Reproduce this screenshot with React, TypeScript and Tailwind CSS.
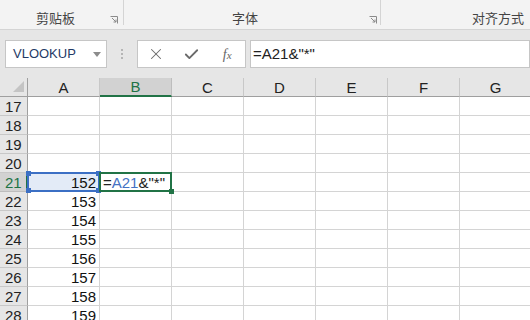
import { X, Check } from "lucide-react";

const cols = ["A", "B", "C", "D", "E", "F", "G"];
const rows = [17, 18, 19, 20, 21, 22, 23, 24, 25, 26, 27, 28];
const values: Record<number, string> = {
  21: "152", 22: "153", 23: "154", 24: "155", 25: "156", 26: "157", 27: "158", 28: "159",
};

function Launcher() {
  return (
    <svg width="8" height="8" viewBox="0 0 8 8" className="shrink-0">
      <path d="M0.5 0.5h7v7" fill="none" stroke="#8a8a8a" strokeWidth="1" />
      <path d="M2 2l4 4M3.5 6h2.5v-2.5" fill="none" stroke="#8a8a8a" strokeWidth="1" />
    </svg>
  );
}

function Handle({ pos, color }: { pos: string; color: string }) {
  return <div className={`absolute w-[5px] h-[5px] ${pos} ${color}`} />;
}

export default function App() {
  return (
    <div className="w-[530px] h-[320px] overflow-hidden bg-[#e6e6e6] font-['Liberation_Sans','Noto_Sans_CJK_SC',sans-serif]">
      {/* Ribbon group labels */}
      <div className="h-[30px] bg-[#f3f3f3] border-b border-[#d4d4d4] flex items-start text-[13px] text-[#444] font-['Noto_Sans_CJK_SC',sans-serif]">
        <div className="w-[124px] h-[25px] border-r border-[#d4d4d4] flex items-end">
          <span className="ml-[36px] mr-auto leading-[15px]">剪贴板</span>
          <div className="mr-[5px] mb-[1px]"><Launcher /></div>
        </div>
        <div className="w-[257px] h-[25px] border-r border-[#d4d4d4] flex items-end">
          <span className="ml-[108px] mr-auto leading-[15px]">字体</span>
          <div className="mr-[3px] mb-[1px]"><Launcher /></div>
        </div>
        <div className="flex-1 h-[25px] flex items-end">
          <span className="ml-[91px] leading-[15px]">对齐方式</span>
        </div>
      </div>

      {/* Formula bar */}
      <div className="flex items-center h-[28px] mt-[10px] pl-[5px]">
        <div className="w-[102px] h-[28px] bg-white border border-[#c6c6c6] flex items-center pl-[7px] pr-[5px]">
          <span className="text-[13px] text-[#1f3a66] flex-1">VLOOKUP</span>
          <svg width="8" height="5" viewBox="0 0 8 5"><path d="M0 0h8L4 5z" fill="#8c8c8c" /></svg>
        </div>
        <div className="w-[30px] flex flex-col items-center gap-[2px]">
          <div className="w-[2px] h-[2px] bg-[#b5b5b5]" />
          <div className="w-[2px] h-[2px] bg-[#b5b5b5]" />
          <div className="w-[2px] h-[2px] bg-[#b5b5b5]" />
        </div>
        <div className="w-[109px] h-[28px] bg-white border border-[#c6c6c6] flex items-center text-[#6a6a6a]">
          <div className="w-[36px] flex justify-center"><X size={18} strokeWidth={1.4} /></div>
          <div className="w-[36px] flex justify-center"><Check size={17} strokeWidth={2.6} /></div>
          <div className="w-[36px] flex justify-center">
            <span className="font-['Liberation_Serif',serif] italic text-[14px] text-[#666]">f<span className="text-[11px]">x</span></span>
          </div>
        </div>
        <div className="flex-1 h-[28px] ml-[4px] bg-white border border-[#c6c6c6] flex items-center pl-[2px] text-[15px] text-[#222]">
          =A21&amp;"*"
        </div>
      </div>

      {/* Sheet */}
      <div className="mt-[10px] grid grid-cols-[28px_repeat(7,72px)] text-[15px] leading-none">
        <div className="h-[19px] bg-[#e6e6e6] border-r border-b border-[#9f9f9f] flex items-end justify-end pr-[3px] pb-[4px]">
          <svg width="11" height="11" viewBox="0 0 11 11"><path d="M11 0v11H0z" fill="#c4c4c4" /></svg>
        </div>
        {cols.map((c) => (
          <div
            key={c}
            className={
              c === "B"
                ? "h-[19px] bg-[#d2d2d2] border-r border-[#bdbdbd] border-b-2 border-b-[#217346] flex items-center justify-center text-[#217346]"
                : "h-[19px] bg-[#e6e6e6] border-r border-[#c8c8c8] border-b border-b-[#9f9f9f] flex items-center justify-center text-[#222]"
            }
          >
            {c}
          </div>
        ))}
        {rows.map((r) => (
          <div key={r} className="contents">
            <div
              className={
                r === 21
                  ? "h-[19px] bg-[#d2d2d2] border-r-2 border-r-[#217346] border-b border-[#bdbdbd] flex items-center pl-[5px] text-[#217346]"
                  : "h-[19px] bg-[#e6e6e6] border-r border-r-[#9f9f9f] border-b border-[#c8c8c8] flex items-center pl-[5px] text-[#222]"
              }
            >
              {r}
            </div>
            {cols.map((c) => {
              if (c === "A" && r === 21) {
                return (
                  <div key={c} className="relative h-[19px] bg-[#e3ebf7] border-r border-b border-[#d4d4d4] flex items-center justify-end pr-[3px] text-[#111]">
                    {values[r]}
                    <div className="absolute -left-px -top-px -right-px -bottom-px border-2 border-[#3b6fc4]" />
                    <Handle pos="-left-[2px] -top-[2px]" color="bg-[#3b6fc4]" />
                    <Handle pos="-right-[2px] -top-[2px]" color="bg-[#3b6fc4]" />
                    <Handle pos="-left-[2px] -bottom-[2px]" color="bg-[#3b6fc4]" />
                    <Handle pos="-right-[2px] -bottom-[2px]" color="bg-[#3b6fc4]" />
                  </div>
                );
              }
              if (c === "B" && r === 21) {
                return (
                  <div key={c} className="relative h-[19px] bg-white border-r border-b border-[#d4d4d4] flex items-center pl-[3px] text-[#222] whitespace-nowrap">
                    =<span className="text-[#4472c4]">A21</span>&amp;"*"
                    <div className="absolute -left-px -top-px -right-px -bottom-px border-2 border-[#217346]" />
                    <Handle pos="-right-[3px] -bottom-[3px]" color="bg-[#217346]" />
                  </div>
                );
              }
              return (
                <div key={c} className="h-[19px] bg-white border-r border-b border-[#d4d4d4] flex items-center justify-end pr-[3px] text-[#111]">
                  {c === "A" ? values[r] ?? "" : ""}
                </div>
              );
            })}
          </div>
        ))}
      </div>
    </div>
  );
}
